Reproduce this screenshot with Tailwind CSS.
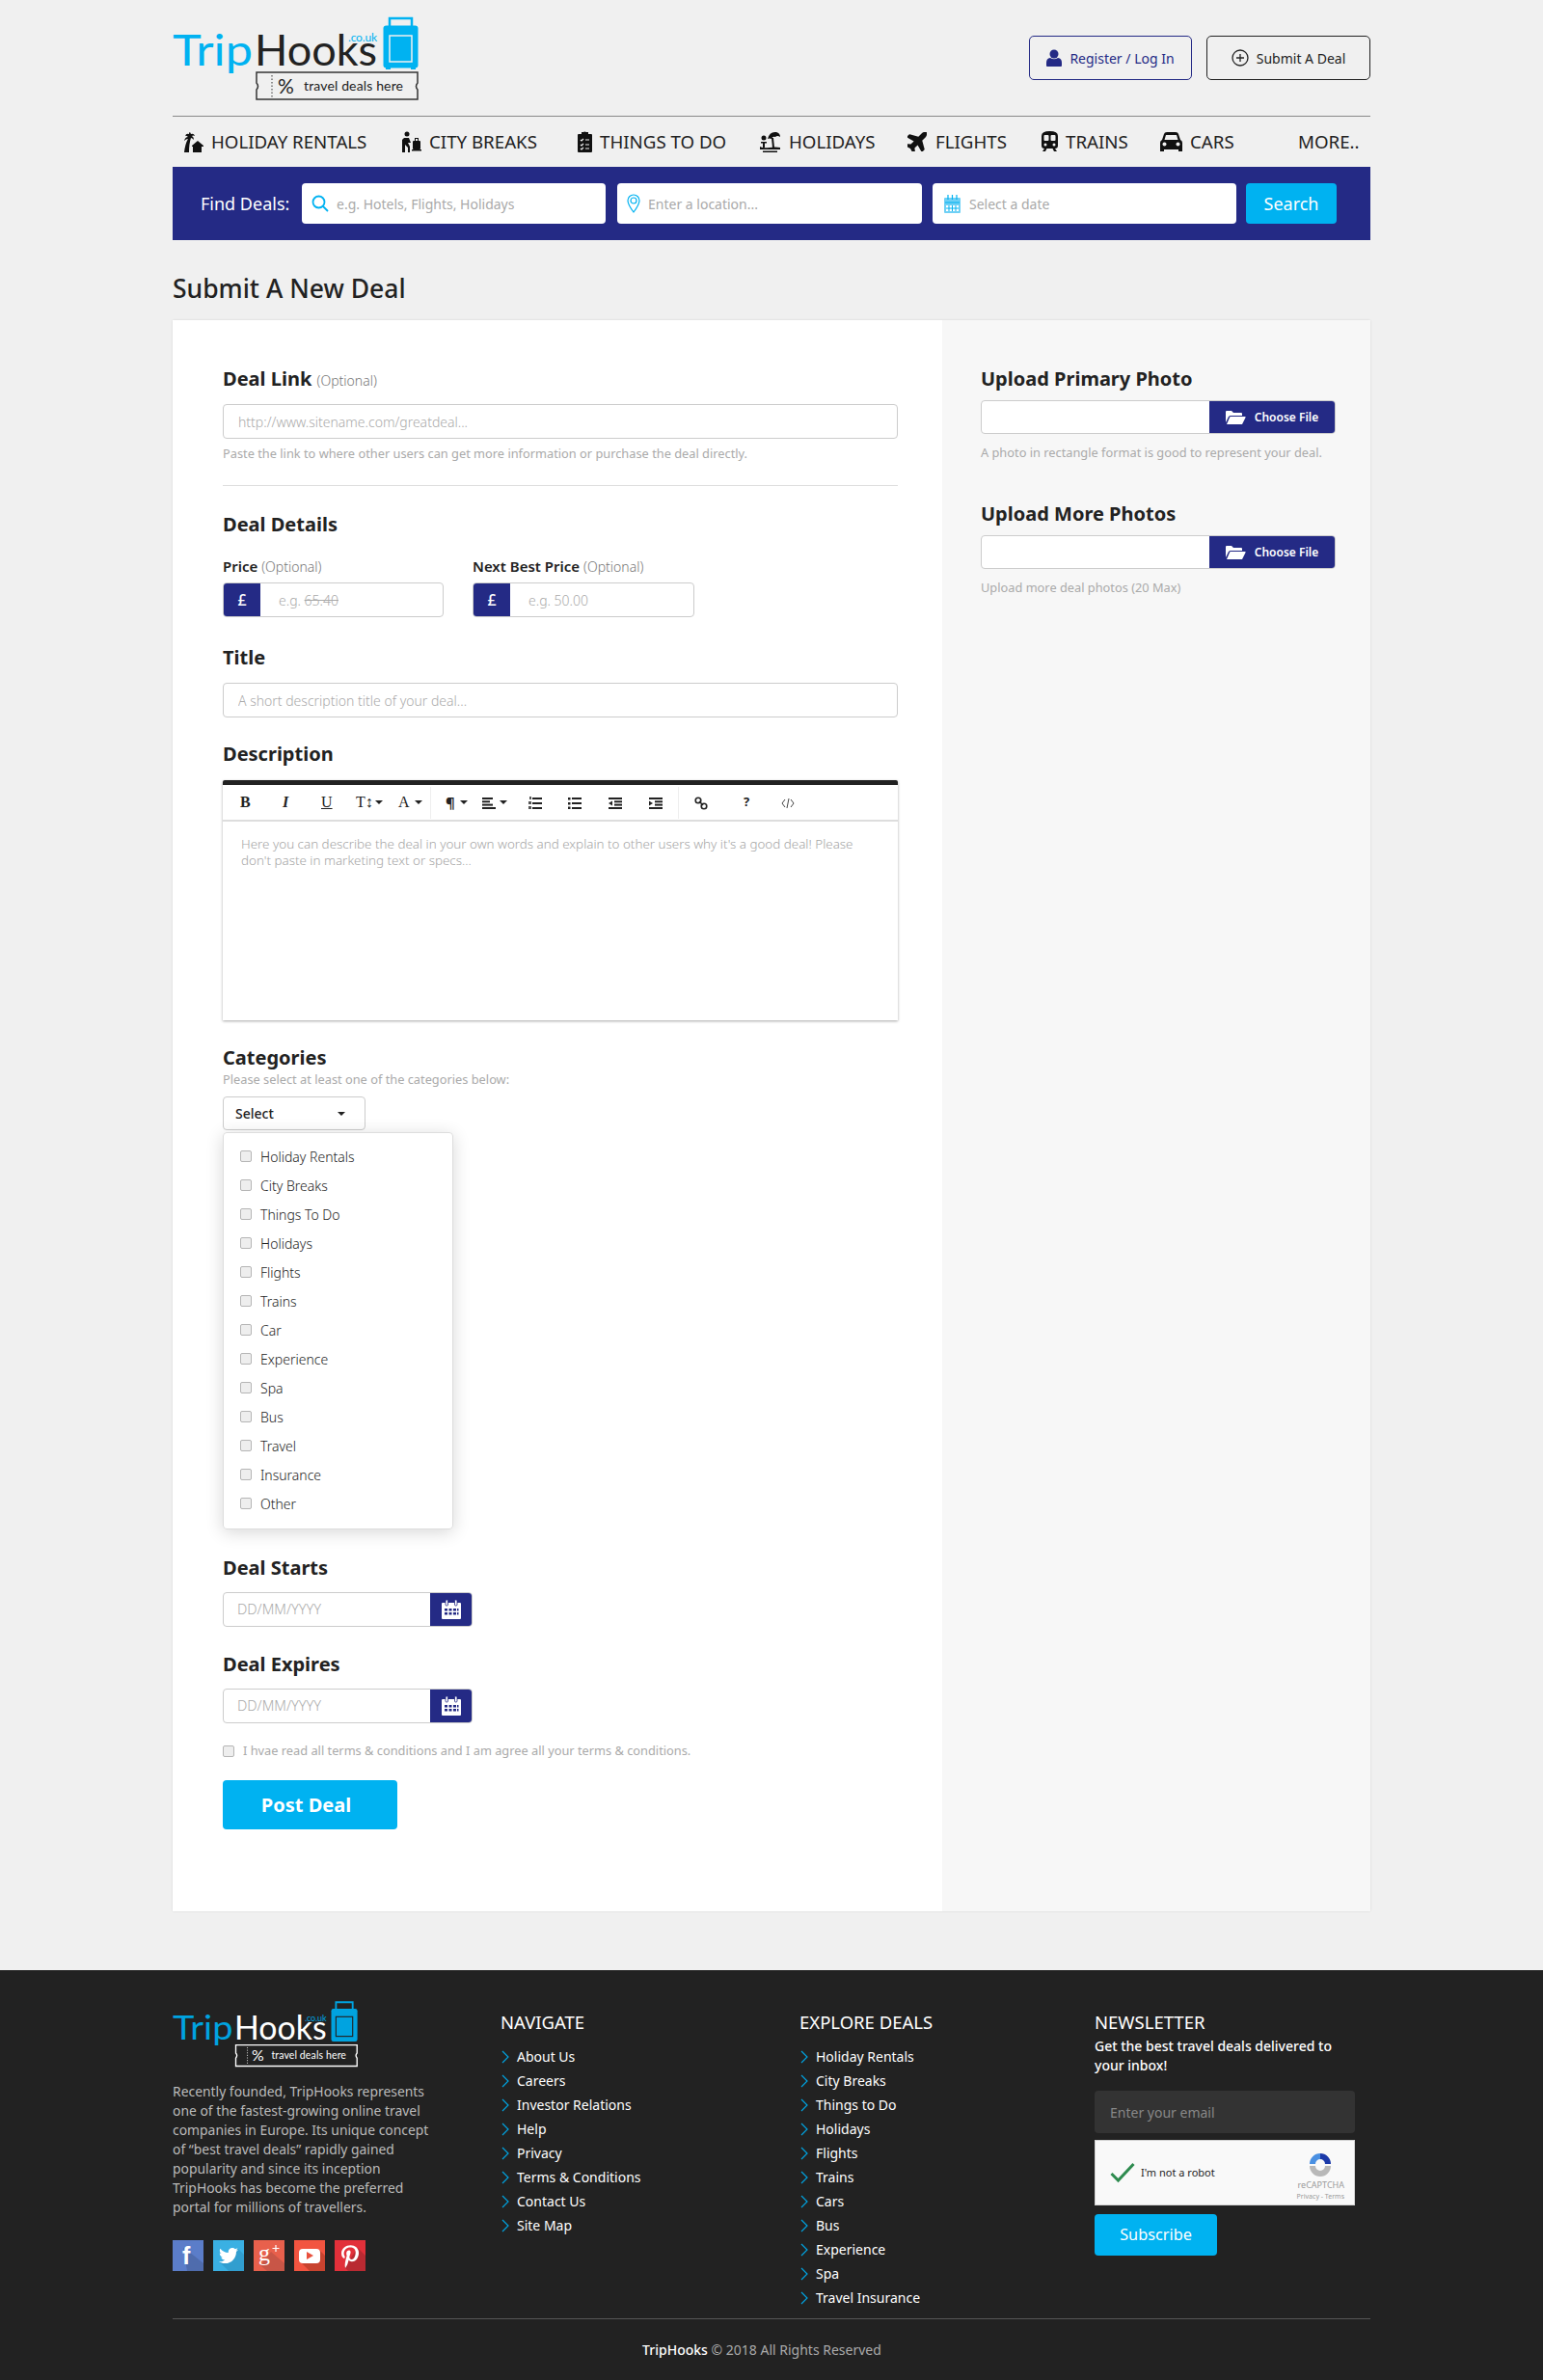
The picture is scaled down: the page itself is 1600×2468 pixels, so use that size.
<!DOCTYPE html>
<html lang="en">
<head>
    <meta charset="UTF-8">
    <meta name="viewport" content="width=device-width, initial-scale=1.0">
    <title>Submit A New Deal - TripHooks</title>
    <script src="https://cdn.jsdelivr.net/npm/@tailwindcss/browser@4"></script>
</head>
<body class="bg-[#f0f0f0] font-['Noto_Sans',sans-serif] text-[#222]">
    <div class="w-[1242px] mx-auto">
        <!-- Header -->
        <header class="h-[120px] flex justify-between border-b border-[#8a8a8a] box-content">
            <svg class="mt-[17px]" width="255" height="88" viewBox="0 0 255 88">
                <text x="0" y="51" font-family="Lato" font-size="45" fill="#00b2f1" textLength="83" lengthAdjust="spacingAndGlyphs">Trip</text>
                <text x="85" y="51" font-family="Lato" font-size="45" fill="#222" textLength="127" lengthAdjust="spacingAndGlyphs">Hooks</text>
                <text x="182" y="26" font-family="Lato" font-size="12" fill="#00b2f1" textLength="30">.co.uk</text>
                <path d="M225 10V2h23v8" fill="none" stroke="#00b2f1" stroke-width="2.5"/>
                <rect x="218.5" y="9.5" width="36" height="44" rx="3" fill="#00b2f1"/>
                <rect x="225" y="20" width="23" height="27" fill="none" stroke="#f0f0f0" stroke-width="1.5"/>
                <rect x="221" y="53" width="5" height="2" fill="#00b2f1"/><rect x="247" y="53" width="5" height="2" fill="#00b2f1"/>
                <path d="M87 58h167v11q-3 3.5 0 7v10H87V76q3-3.5 0-7z" fill="none" stroke="#333" stroke-width="1.5"/>
                <path d="M103 61v24" stroke="#333" stroke-dasharray="1.5 2"/>
                <text x="109" y="80" font-family="Lato" font-size="21" fill="#222">%</text>
                <text x="136" y="77" font-family="Lato" font-size="14" fill="#222" textLength="103">travel deals here</text>
            </svg>
            <div class="mt-[37px] flex gap-[15px]">
                <a class="w-[169px] h-[46px] flex items-center justify-center gap-2 border border-[#242a85] rounded-[5px] text-[#242a85] text-[14px]">
                    <svg width="16" height="18" viewBox="0 0 16 18" fill="#242a85"><circle cx="8" cy="5" r="4.5"/><path d="M0 17v-3q0-4.5 4-5 4 2.5 8 0 4 .5 4 5v3q0 1-1 1H1q-1 0-1-1z"/></svg>
                    Register / Log In
                </a>
                <a class="w-[170px] h-[46px] flex items-center justify-center gap-2 border border-[#222] rounded-[5px] text-[14px]">
                    <svg width="18" height="18" viewBox="0 0 18 18" fill="none" stroke="#222" stroke-width="1.3"><circle cx="9" cy="9" r="8"/><path d="M9 5v8M5 9h8"/></svg>
                    Submit A Deal
                </a>
            </div>
        </header>

        <!-- Nav -->
        <nav class="h-[52px] flex items-center text-[18.7px] text-[#222] pl-[11px]">
            <a class="w-[227px] flex items-center gap-[8px]">
                <svg width="21" height="22" viewBox="0 0 21 22" fill="#111"><path d="M1 22q1-9 4-14-2 0-4 2 1-4 4-4-2-2-3-1 1-3 4-2 0-2 1-2l1 2q3-1 4 2-2-1-3 0 2 1 2 4-2-2-3-2-2 6-2 15z"/><path d="M9 15l6-5 6 5v1h-2v6h-9v-6H9z"/></svg>
                HOLIDAY RENTALS
            </a>
            <a class="w-[182px] flex items-center gap-[8px]">
                <svg width="20" height="22" viewBox="0 0 20 22" fill="#111"><circle cx="5" cy="3" r="2.5"/><path d="M2 7h5l2 5h-3l2 4v6H6v-5l-3-3v8H0V9z"/><rect x="11" y="10" width="8" height="9" rx="1"/><path d="M13 10V7h4v3h-1V8h-2v2zM10 19h10v1.5H10z"/></svg>
                CITY BREAKS
            </a>
            <a class="w-[189px] flex items-center gap-[8px]">
                <svg width="15" height="22" viewBox="0 0 15 22"><path fill="#111" d="M1 3h3V1h2q1-1 3 0h2v2h3q1 0 1 1v17q0 1-1 1H1q-1 0-1-1V4q0-1 1-1z"/><path fill="none" stroke="#f0f0f0" stroke-width="1.2" d="M3 9l1 1 2-2M3 14l1 1 2-2M3 18l1 1 2-2M8 9h4M8 14h4M8 18h4"/></svg>
                THINGS TO DO
            </a>
            <a class="w-[153px] flex items-center gap-[9px]">
                <svg width="21" height="22" viewBox="0 0 21 22" fill="#111"><path d="M8 8q2-8 9-7 4 1 4 5-3-2-5 0-3-1-4 2-2-1-4 0z"/><path d="M14 7l1 10h-2l-1-10z"/><circle cx="4" cy="7" r="2.5"/><path d="M1 11h6v1.5H5V17H3v-4.5H1zM0 16q3 2 10 1 6-1 11 0v2H0zM3 20.5h15V22H3z"/></svg>
                HOLIDAYS
            </a>
            <a class="w-[139px] flex items-center gap-[9px]">
                <svg width="20" height="20" viewBox="40 80 456 456" fill="#111"><g transform="rotate(-45 288 288) translate(0 32)"><path d="M480 192H365.71L260.61 8.06A16.014 16.014 0 0 0 246.71 0h-65.5c-10.63 0-18.3 10.17-15.38 20.39L214.86 192H112l-43.2-57.6c-3.02-4.03-7.77-6.4-12.8-6.4H16.01C5.6 128-2.04 137.78.49 147.88L32 256 .49 364.12C-2.04 374.22 5.6 384 16.01 384H56c5.04 0 9.78-2.37 12.8-6.4L112 320h102.86l-49.03 171.6c-2.92 10.22 4.75 20.4 15.38 20.4h65.5c5.74 0 11.04-3.08 13.89-8.06L365.71 320H480c35.35 0 96-28.65 96-64s-60.65-64-96-64z"/></g></svg>
                FLIGHTS
            </a>
            <a class="w-[123px] flex items-center gap-[8px]">
                <svg width="17" height="21" viewBox="0 0 17 21"><path fill="#111" d="M0 5q0-5 8.5-5T17 5v10q0 3-3 3l2 3h-3l-1.5-3h-6L4 21H1l2-3q-3 0-3-3z"/><rect x="2.5" y="4" width="5" height="6" rx="1" fill="#f0f0f0"/><rect x="9.5" y="4" width="5" height="6" rx="1" fill="#f0f0f0"/><circle cx="4" cy="14" r="1.5" fill="#f0f0f0"/><circle cx="13" cy="14" r="1.5" fill="#f0f0f0"/></svg>
                TRAINS
            </a>
            <a class="w-[143px] flex items-center gap-[8px]">
                <svg width="23" height="20" viewBox="0 0 23 20"><path fill="#111" d="M4 2q.5-2 3-2h9q2.5 0 3 2l2 6q2 1 2 3v9h-4v-2H4v2H0v-9q0-2 2-3z"/><path fill="#f0f0f0" d="M6 3h11l1.5 5h-14z"/><circle cx="4.5" cy="12.5" r="2" fill="#f0f0f0"/><circle cx="18.5" cy="12.5" r="2" fill="#f0f0f0"/></svg>
                CARS
            </a>
            <a>MORE..</a>
        </nav>

        <!-- Search bar -->
        <div class="h-[76px] bg-[#242a85] flex items-center pl-[29px] text-[14px]">
            <span class="w-[105px] text-white text-[18px]">Find Deals:</span>
            <div class="w-[315px] h-[42px] bg-white rounded-[4px] flex items-center pl-[10px] gap-2">
                <svg width="18" height="18" viewBox="0 0 18 18" fill="none" stroke="#00b2f1" stroke-width="1.8"><circle cx="7.5" cy="7.5" r="6"/><path d="M12 12l5 5"/></svg>
                <input class="flex-1 min-w-0 outline-none placeholder:text-[#a9a9a9]" placeholder="e.g. Hotels, Flights, Holidays">
            </div>
            <div class="ml-[12px] w-[316px] h-[42px] bg-white rounded-[4px] flex items-center pl-[10px] gap-2">
                <svg width="14" height="20" viewBox="0 0 14 20" fill="none" stroke="#00b2f1" stroke-width="1.2"><path d="M7 19Q1 11 1 7a6 6 0 0 1 12 0q0 4-6 12z"/><circle cx="7" cy="7" r="3"/></svg>
                <input class="flex-1 min-w-0 outline-none placeholder:text-[#a9a9a9]" placeholder="Enter a location...">
            </div>
            <div class="ml-[11px] w-[315px] h-[42px] bg-white rounded-[4px] flex items-center pl-[12px] gap-[9px]">
                <svg width="17" height="19" viewBox="0 0 17 19"><rect y="3" width="17" height="16" rx="1" fill="#6fd0f5"/><path d="M1 8h15M4 0v5M8.5 0v5M13 0v5" stroke="#00b2f1" stroke-width="1.2"/><path d="M2 11h13v6H2z" fill="#fff"/><path d="M2 14h13M5 11v6M8.5 11v6M12 11v6" stroke="#00b2f1"/></svg>
                <input class="flex-1 min-w-0 outline-none placeholder:text-[#a9a9a9]" placeholder="Select a date">
            </div>
            <button class="ml-[10px] w-[94px] h-[42px] bg-[#00b2f1] rounded-[4px] text-white text-[18px]">Search</button>
        </div>

        <h1 class="pt-[36px] pb-[19px] text-[26.5px] leading-[28px] font-medium">Submit A New Deal</h1>

        <!-- Card -->
        <div class="h-[1650px] flex bg-white shadow-[0_0_2px_rgba(0,0,0,0.12)]">
            <div class="w-[798px] pl-[52px] pr-[46px] pt-[49px]">
                <h2 class="h-[24px] text-[20px] leading-[24px] font-bold">Deal Link <span class="text-[14px] font-light text-[#777]">(Optional)</span></h2>
                <input class="mt-[14px] w-full h-[36px] px-[15px] border border-[#ccc] rounded-[4px] text-[14px] font-light outline-none placeholder:text-[#aaa]" placeholder="http://www.sitename.com/greatdeal...">
                <p class="mt-[7px] text-[12.8px] leading-[16px] text-[#aaa]">Paste the link to where other users can get more information or purchase the deal directly.</p>
                <div class="mt-[25px] border-t border-[#ddd]"></div>

                <h2 class="mt-[28px] text-[20px] leading-[24px] font-bold">Deal Details</h2>
                <div class="mt-[21px] flex gap-[30px]">
                    <div class="w-[229px]">
                        <div class="h-[20px] text-[15px] leading-[20px] font-semibold">Price <span class="text-[14px] font-light text-[#777]">(Optional)</span></div>
                        <div class="mt-[7px] h-[36px] flex border border-[#ccc] rounded-[4px] overflow-hidden">
                            <span class="w-[38px] bg-[#242a85] text-white flex items-center justify-center text-[16px] font-medium">£</span>
                            <span class="pl-[19px] flex items-center text-[14px] font-light text-[#aaa]">e.g.&nbsp;<span class="line-through">65.40</span></span>
                        </div>
                    </div>
                    <div class="w-[230px]">
                        <div class="h-[20px] text-[15px] leading-[20px] font-semibold">Next Best Price <span class="text-[14px] font-light text-[#777]">(Optional)</span></div>
                        <div class="mt-[7px] h-[36px] flex border border-[#ccc] rounded-[4px] overflow-hidden">
                            <span class="w-[38px] bg-[#242a85] text-white flex items-center justify-center text-[16px] font-medium">£</span>
                            <span class="pl-[19px] flex items-center text-[14px] font-light text-[#aaa]">e.g. 50.00</span>
                        </div>
                    </div>
                </div>

                <h2 class="mt-[30px] text-[20px] leading-[24px] font-bold">Title</h2>
                <input class="mt-[14px] w-full h-[36px] px-[15px] border border-[#ccc] rounded-[4px] text-[14px] font-light outline-none placeholder:text-[#aaa]" placeholder="A short description title of your deal...">

                <h2 class="mt-[26px] text-[20px] leading-[24px] font-bold">Description</h2>
                <!-- Editor -->
                <div class="mt-[15px] h-[249px] border-t-[5px] border-[#222] rounded-t-[2px] shadow-[0_1px_3px_rgba(0,0,0,0.35)]">
                    <div class="relative h-[38px] border-b-2 border-[#ddd] flex items-center text-[#222]">
                        <span class="absolute left-[18px] font-['Liberation_Serif'] text-[16px] font-bold">B</span>
                        <span class="absolute left-[62px] font-['Liberation_Serif'] text-[16px] italic font-bold">I</span>
                        <span class="absolute left-[102px] font-['Liberation_Serif'] text-[16px] underline">U</span>
                        <span class="absolute left-[138px] font-['Liberation_Serif'] text-[16px]">T↕</span>
                        <span class="absolute left-[182px] font-['Liberation_Serif'] text-[16px]">A</span>
                        <i class="absolute left-[158px] top-[16px] border-x-[4px] border-t-[4px] border-x-transparent border-t-[#222]"></i>
                        <i class="absolute left-[199px] top-[16px] border-x-[4px] border-t-[4px] border-x-transparent border-t-[#222]"></i>
                        <div class="absolute left-[215px] top-[2px] h-[33px] border-l border-[#eee]"></div>
                        <span class="absolute left-[231px] text-[15px] font-bold">¶</span>
                        <i class="absolute left-[246px] top-[16px] border-x-[4px] border-t-[4px] border-x-transparent border-t-[#222]"></i>
                        <svg class="absolute left-[269px] top-[13px]" width="14" height="12" fill="#222"><rect width="11" height="2"/><rect y="3.3" width="8" height="2"/><rect y="6.6" width="11" height="2"/><rect y="10" width="14" height="2"/></svg>
                        <i class="absolute left-[287px] top-[16px] border-x-[4px] border-t-[4px] border-x-transparent border-t-[#222]"></i>
                        <svg class="absolute left-[317px] top-[12px]" width="14" height="14" fill="#222"><rect x="1" y="0" width="2" height="3" fill="#555"/><rect x="0" y="5" width="3" height="3" fill="#555"/><rect x="0" y="10" width="3" height="3" fill="#555"/><rect x="4" y="1" width="10" height="2"/><rect x="4" y="6" width="10" height="2"/><rect x="4" y="11" width="10" height="2"/></svg>
                        <svg class="absolute left-[358px] top-[13px]" width="14" height="12" fill="#222"><rect width="2.5" height="2.5"/><rect y="5" width="2.5" height="2.5"/><rect y="9.5" width="2.5" height="2.5"/><rect x="4" width="10" height="2"/><rect x="4" y="5" width="10" height="2"/><rect x="4" y="10" width="10" height="2"/></svg>
                        <svg class="absolute left-[400px] top-[13px]" width="14" height="12" fill="#222"><rect width="14" height="2"/><rect x="6" y="3.3" width="8" height="2"/><rect x="6" y="6.6" width="8" height="2"/><rect y="10" width="14" height="2"/><path d="M4 3.5v5L0 6z"/></svg>
                        <svg class="absolute left-[442px] top-[13px]" width="14" height="12" fill="#222"><rect width="14" height="2"/><rect x="6" y="3.3" width="8" height="2"/><rect x="6" y="6.6" width="8" height="2"/><rect y="10" width="14" height="2"/><path d="M0 3.5v5L4 6z"/></svg>
                        <div class="absolute left-[472px] top-[2px] h-[33px] border-l border-[#eee]"></div>
                        <svg class="absolute left-[489px] top-[12px]" width="14" height="14" fill="none" stroke="#222" stroke-width="1.6"><ellipse cx="4" cy="4" rx="2.8" ry="2.8"/><ellipse cx="10" cy="10" rx="2.8" ry="2.8"/><path d="M5 5l4 4"/></svg>
                        <span class="absolute left-[540px] text-[13px] font-bold">?</span>
                        <svg class="absolute left-[579px] top-[13px]" width="14" height="12" fill="none" stroke="#444"><path d="M4 2L1 6l3 4M10 2l3 4-3 4M8 1L6 11"/></svg>
                    </div>
                    <p class="px-[19px] pt-[15px] text-[13.4px] leading-[17px] font-light text-[#a5a5a5]">Here you can describe the deal in your own words and explain to other users why it's a good deal! Please don't paste in marketing text or specs...</p>
                </div>

                <h2 class="mt-[27px] text-[20px] leading-[24px] font-bold">Categories</h2>
                <p class="mt-[3px] text-[12.8px] leading-[14px] text-[#aaa]">Please select at least one of the categories below:</p>
                <button class="mt-[11px] w-[148px] h-[35px] pl-[12px] pr-[20px] flex items-center justify-between border border-[#ccc] rounded-[4px] text-[14px] font-medium">
                    Select
                    <i class="border-x-[4px] border-t-[4px] border-x-transparent border-t-[#222]"></i>
                </button>
                <!-- Category dropdown -->
                <div class="mt-[2px] w-[239px] h-[412px] pt-[9px] pl-[17px] border border-[#ddd] rounded-[4px] shadow-[0_3px_18px_rgba(0,0,0,0.16)] text-[14px] font-light">
                    <label class="h-[30px] flex items-center gap-[9px]"><input type="checkbox" class="appearance-none w-[12px] h-[12px] bg-[#eee] border border-[#b5b5b5] rounded-[2px]">Holiday Rentals</label>
                    <label class="h-[30px] flex items-center gap-[9px]"><input type="checkbox" class="appearance-none w-[12px] h-[12px] bg-[#eee] border border-[#b5b5b5] rounded-[2px]">City Breaks</label>
                    <label class="h-[30px] flex items-center gap-[9px]"><input type="checkbox" class="appearance-none w-[12px] h-[12px] bg-[#eee] border border-[#b5b5b5] rounded-[2px]">Things To Do</label>
                    <label class="h-[30px] flex items-center gap-[9px]"><input type="checkbox" class="appearance-none w-[12px] h-[12px] bg-[#eee] border border-[#b5b5b5] rounded-[2px]">Holidays</label>
                    <label class="h-[30px] flex items-center gap-[9px]"><input type="checkbox" class="appearance-none w-[12px] h-[12px] bg-[#eee] border border-[#b5b5b5] rounded-[2px]">Flights</label>
                    <label class="h-[30px] flex items-center gap-[9px]"><input type="checkbox" class="appearance-none w-[12px] h-[12px] bg-[#eee] border border-[#b5b5b5] rounded-[2px]">Trains</label>
                    <label class="h-[30px] flex items-center gap-[9px]"><input type="checkbox" class="appearance-none w-[12px] h-[12px] bg-[#eee] border border-[#b5b5b5] rounded-[2px]">Car</label>
                    <label class="h-[30px] flex items-center gap-[9px]"><input type="checkbox" class="appearance-none w-[12px] h-[12px] bg-[#eee] border border-[#b5b5b5] rounded-[2px]">Experience</label>
                    <label class="h-[30px] flex items-center gap-[9px]"><input type="checkbox" class="appearance-none w-[12px] h-[12px] bg-[#eee] border border-[#b5b5b5] rounded-[2px]">Spa</label>
                    <label class="h-[30px] flex items-center gap-[9px]"><input type="checkbox" class="appearance-none w-[12px] h-[12px] bg-[#eee] border border-[#b5b5b5] rounded-[2px]">Bus</label>
                    <label class="h-[30px] flex items-center gap-[9px]"><input type="checkbox" class="appearance-none w-[12px] h-[12px] bg-[#eee] border border-[#b5b5b5] rounded-[2px]">Travel</label>
                    <label class="h-[30px] flex items-center gap-[9px]"><input type="checkbox" class="appearance-none w-[12px] h-[12px] bg-[#eee] border border-[#b5b5b5] rounded-[2px]">Insurance</label>
                    <label class="h-[30px] flex items-center gap-[9px]"><input type="checkbox" class="appearance-none w-[12px] h-[12px] bg-[#eee] border border-[#b5b5b5] rounded-[2px]">Other</label>
                </div>

                <h2 class="mt-[28px] text-[20px] leading-[24px] font-bold">Deal Starts</h2>
                <div class="mt-[13px] w-[259px] h-[36px] flex border border-[#ccc] rounded-[4px] overflow-hidden">
                    <input class="w-[214px] pl-[14px] text-[14.5px] font-light outline-none placeholder:text-[#aaa]" placeholder="DD/MM/YYYY">
                    <span class="flex-1 bg-[#242a85] flex items-center justify-center">
                        <svg width="20" height="20" viewBox="0 0 20 20"><path fill="#fff" d="M1 3h18q1 0 1 1v15q0 1-1 1H1q-1 0-1-1V4q0-1 1-1z"/><rect x="4" y="0" width="2.5" height="6" rx="1" fill="#fff" stroke="#242a85" stroke-width=".8"/><rect x="13.5" y="0" width="2.5" height="6" rx="1" fill="#fff" stroke="#242a85" stroke-width=".8"/><path fill="#242a85" d="M3 9h3v2.5H3zM7.5 9h3v2.5h-3zM12 9h3v2.5h-3zM16 9h1.5v2.5H16zM3 13h3v2.5H3zM7.5 13h3v2.5h-3zM12 13h3v2.5h-3zM16 13h1.5v2.5H16z"/></svg>
                    </span>
                </div>
                <h2 class="mt-[27px] text-[20px] leading-[24px] font-bold">Deal Expires</h2>
                <div class="mt-[13px] w-[259px] h-[36px] flex border border-[#ccc] rounded-[4px] overflow-hidden">
                    <input class="w-[214px] pl-[14px] text-[14.5px] font-light outline-none placeholder:text-[#aaa]" placeholder="DD/MM/YYYY">
                    <span class="flex-1 bg-[#242a85] flex items-center justify-center">
                        <svg width="20" height="20" viewBox="0 0 20 20"><path fill="#fff" d="M1 3h18q1 0 1 1v15q0 1-1 1H1q-1 0-1-1V4q0-1 1-1z"/><rect x="4" y="0" width="2.5" height="6" rx="1" fill="#fff" stroke="#242a85" stroke-width=".8"/><rect x="13.5" y="0" width="2.5" height="6" rx="1" fill="#fff" stroke="#242a85" stroke-width=".8"/><path fill="#242a85" d="M3 9h3v2.5H3zM7.5 9h3v2.5h-3zM12 9h3v2.5h-3zM16 9h1.5v2.5H16zM3 13h3v2.5H3zM7.5 13h3v2.5h-3zM12 13h3v2.5h-3zM16 13h1.5v2.5H16z"/></svg>
                    </span>
                </div>
                <label class="mt-[21px] h-[16px] flex items-center gap-[9px] text-[12.8px] text-[#aaa]"><input type="checkbox" class="appearance-none w-[12px] h-[12px] bg-[#eee] border border-[#b5b5b5] rounded-[2px]">I hvae read all terms &amp; conditions and I am agree all your terms &amp; conditions.</label>
                <button class="mt-[22px] w-[181px] h-[51px] pr-[8px] bg-[#00b2f1] rounded-[4px] text-white text-[20px] font-bold">Post Deal</button>
            </div>

            <!-- Uploads -->
            <div class="flex-1 bg-[#f7f7f7] pl-[40px] pr-[36px] pt-[49px]">
                <h2 class="text-[20px] leading-[24px] font-bold">Upload Primary Photo</h2>
                <div class="mt-[10px] h-[35px] flex bg-white border border-[#ccc] rounded-[4px] overflow-hidden">
                    <span class="flex-1"></span>
                    <span class="w-[130px] bg-[#242a85] text-white text-[12px] font-semibold flex items-center justify-center gap-[9px]">
                        <svg width="21" height="16" viewBox="0 0 21 16" fill="#fff"><path d="M0 2q0-1 1-1h5l2 2h8q1 0 1 1v2H5q-1 0-2 1L0 13z"/><path d="M5 7h15q1 0 .5 1L17 15H1l3-7q.3-1 1-1z"/></svg>
                        Choose File
                    </span>
                </div>
                <p class="mt-[11px] text-[12.8px] leading-[16px] text-[#aaa]">A photo in rectangle format is good to represent your deal.</p>
                <h2 class="mt-[44px] text-[20px] leading-[24px] font-bold">Upload More Photos</h2>
                <div class="mt-[10px] h-[35px] flex bg-white border border-[#ccc] rounded-[4px] overflow-hidden">
                    <span class="flex-1"></span>
                    <span class="w-[130px] bg-[#242a85] text-white text-[12px] font-semibold flex items-center justify-center gap-[9px]">
                        <svg width="21" height="16" viewBox="0 0 21 16" fill="#fff"><path d="M0 2q0-1 1-1h5l2 2h8q1 0 1 1v2H5q-1 0-2 1L0 13z"/><path d="M5 7h15q1 0 .5 1L17 15H1l3-7q.3-1 1-1z"/></svg>
                        Choose File
                    </span>
                </div>
                <p class="mt-[11px] text-[12.8px] leading-[16px] text-[#aaa]">Upload more deal photos (20 Max)</p>
            </div>
        </div>
    </div>

    <!-- Footer -->
    <footer class="mt-[61px] h-[425px] bg-[#222] text-white">
        <div class="w-[1242px] mx-auto pt-[31px]">
            <div class="h-[330px] grid grid-cols-[340px_310px_306px_1fr]">
                <div>
                    <svg class="block" width="192" height="70" viewBox="0 0 255 93">
                        <text x="0" y="54" font-family="Lato" font-size="45" fill="#00a3e0" textLength="83" lengthAdjust="spacingAndGlyphs">Trip</text>
                        <text x="85" y="54" font-family="Lato" font-size="45" fill="#fff" textLength="127" lengthAdjust="spacingAndGlyphs">Hooks</text>
                        <text x="182" y="29" font-family="Lato" font-size="12" fill="#00a3e0" textLength="30">.co.uk</text>
                        <path d="M225 13V3h23v10" fill="none" stroke="#00a3e0" stroke-width="2.5"/>
                        <rect x="218.5" y="12" width="36" height="45" rx="3" fill="#00a3e0"/>
                        <rect x="225" y="23" width="23" height="27" fill="none" stroke="#222" stroke-width="1.5"/>
                        <path d="M87 62h167v11q-3 3.5 0 7v11H87V80q3-3.5 0-7z" fill="none" stroke="#fff" stroke-width="1.8"/>
                        <path d="M103 65v24" stroke="#fff" stroke-dasharray="1.5 2"/>
                        <text x="109" y="84" font-family="Lato" font-size="21" fill="#fff">%</text>
                        <text x="136" y="81" font-family="Lato" font-size="14" fill="#fff" textLength="103">travel deals here</text>
                    </svg>
                    <p class="mt-[15px] w-[280px] text-[13.9px] leading-[20px] text-[#bbb]">Recently founded, TripHooks represents one of the fastest-growing online travel companies in Europe. Its unique concept of “best travel deals” rapidly gained popularity and since its inception TripHooks has become the preferred portal for millions of travellers.</p>
                    <div class="mt-[24px] flex gap-[10px]">
                        <svg width="32" height="32" viewBox="0 0 32 32"><rect width="32" height="32" fill="#5b7dc9"/><path d="M12 8l20 16v8H15l-4-24z" fill="#4f6cad"/><text x="10" y="25" font-family="Liberation Sans" font-weight="bold" font-size="25" fill="#fff">f</text></svg>
                        <svg width="32" height="32" viewBox="0 0 32 32"><rect width="32" height="32" fill="#3ab0e3"/><path d="M26 9l6 6v17H16l-9-9z" fill="#319ecf"/><svg x="6" y="6" width="20" height="20" viewBox="0 0 512 512"><path fill="#fff" d="M459.37 151.716c.325 4.548.325 9.097.325 13.645 0 138.72-105.583 298.558-298.558 298.558-59.452 0-114.68-17.219-161.137-47.106 8.447.974 16.568 1.299 25.34 1.299 49.055 0 94.213-16.568 130.274-44.832-46.132-.975-84.792-31.188-98.112-72.772 6.498.974 12.995 1.624 19.818 1.624 9.421 0 18.843-1.3 27.614-3.573-48.081-9.747-84.143-51.98-84.143-102.985v-1.299c13.969 7.797 30.214 12.67 47.431 13.319-28.264-18.843-46.781-51.005-46.781-87.391 0-19.492 5.197-37.36 14.294-52.954 51.655 63.675 129.3 105.258 216.365 109.807-1.624-7.797-2.599-15.918-2.599-24.04 0-57.828 46.782-104.934 104.934-104.934 30.213 0 57.502 12.67 76.67 33.137 23.715-4.548 46.456-13.32 66.599-25.34-7.798 24.366-24.366 44.833-46.132 57.827 21.117-2.273 41.584-8.122 60.426-16.243-14.292 20.791-32.161 39.308-52.628 54.253z"/></svg></svg>
                        <svg width="32" height="32" viewBox="0 0 32 32"><rect width="32" height="32" fill="#e8604c"/><path d="M18 12l14 12v8H14l-7-6z" fill="#c85647"/><text x="5" y="21" font-family="Liberation Serif" font-size="24" fill="#fff">g</text><path d="M23 5v7M19.5 8.5h7" stroke="#fff" stroke-width="1.2"/></svg>
                        <svg width="32" height="32" viewBox="0 0 32 32"><rect width="32" height="32" fill="#f25440"/><path d="M26 10l6 6v16H16L6 22z" fill="#c8432f"/><rect x="5" y="9" width="22" height="15" rx="4" fill="#fff"/><path d="M13 12v8l7-4z" fill="#e8503d"/></svg>
                        <svg width="32" height="32" viewBox="0 0 32 32"><rect width="32" height="32" fill="#e2303a"/><path d="M24 8l8 8v16H14l-4-4z" fill="#b92a32"/><svg x="7" y="5" width="18" height="24" viewBox="0 0 384 512"><path fill="#fff" d="M204 6.5C101.4 6.5 0 74.9 0 185.6 0 256 39.6 296 63.6 296c9.9 0 15.6-27.6 15.6-35.4 0-9.3-23.7-29.1-23.7-67.8 0-80.4 61.2-137.4 140.4-137.4 68.1 0 118.5 38.7 118.5 109.8 0 53.1-21.3 152.7-90.3 152.7-24.9 0-46.2-18-46.2-43.8 0-37.8 26.4-74.4 26.4-113.4 0-66.2-93.9-54.2-93.9 25.8 0 16.8 2.1 35.4 9.6 50.7-13.8 59.4-42 147.9-42 209.1 0 18.9 2.7 37.5 4.5 56.4 3.4 3.8 1.7 3.4 6.9 1.5 50.4-69 48.6-82.5 71.4-172.8 12.3 23.4 44.1 36 69.3 36 106.2 0 153.9-103.5 153.9-196.8C384 71.3 298.2 6.5 204 6.5z"/></svg></svg>
                    </div>
                </div>
                <div class="pt-[12px]">
                    <h3 class="text-[18.5px] leading-[22px]">NAVIGATE</h3>
                    <ul class="mt-[12px] text-[14px] leading-[25px]">
                        <li class="flex items-center gap-[8px]"><svg width="9" height="14" viewBox="0 0 9 14" fill="none" stroke="#00a3e0" stroke-width="1.2"><path d="M2 1l6 6-6 6"/></svg>About Us</li>
                        <li class="flex items-center gap-[8px]"><svg width="9" height="14" viewBox="0 0 9 14" fill="none" stroke="#00a3e0" stroke-width="1.2"><path d="M2 1l6 6-6 6"/></svg>Careers</li>
                        <li class="flex items-center gap-[8px]"><svg width="9" height="14" viewBox="0 0 9 14" fill="none" stroke="#00a3e0" stroke-width="1.2"><path d="M2 1l6 6-6 6"/></svg>Investor Relations</li>
                        <li class="flex items-center gap-[8px]"><svg width="9" height="14" viewBox="0 0 9 14" fill="none" stroke="#00a3e0" stroke-width="1.2"><path d="M2 1l6 6-6 6"/></svg>Help</li>
                        <li class="flex items-center gap-[8px]"><svg width="9" height="14" viewBox="0 0 9 14" fill="none" stroke="#00a3e0" stroke-width="1.2"><path d="M2 1l6 6-6 6"/></svg>Privacy</li>
                        <li class="flex items-center gap-[8px]"><svg width="9" height="14" viewBox="0 0 9 14" fill="none" stroke="#00a3e0" stroke-width="1.2"><path d="M2 1l6 6-6 6"/></svg>Terms &amp; Conditions</li>
                        <li class="flex items-center gap-[8px]"><svg width="9" height="14" viewBox="0 0 9 14" fill="none" stroke="#00a3e0" stroke-width="1.2"><path d="M2 1l6 6-6 6"/></svg>Contact Us</li>
                        <li class="flex items-center gap-[8px]"><svg width="9" height="14" viewBox="0 0 9 14" fill="none" stroke="#00a3e0" stroke-width="1.2"><path d="M2 1l6 6-6 6"/></svg>Site Map</li>
                    </ul>
                </div>
                <div class="pt-[12px]">
                    <h3 class="text-[18.5px] leading-[22px]">EXPLORE DEALS</h3>
                    <ul class="mt-[12px] text-[14px] leading-[25px]">
                        <li class="flex items-center gap-[8px]"><svg width="9" height="14" viewBox="0 0 9 14" fill="none" stroke="#00a3e0" stroke-width="1.2"><path d="M2 1l6 6-6 6"/></svg>Holiday Rentals</li>
                        <li class="flex items-center gap-[8px]"><svg width="9" height="14" viewBox="0 0 9 14" fill="none" stroke="#00a3e0" stroke-width="1.2"><path d="M2 1l6 6-6 6"/></svg>City Breaks</li>
                        <li class="flex items-center gap-[8px]"><svg width="9" height="14" viewBox="0 0 9 14" fill="none" stroke="#00a3e0" stroke-width="1.2"><path d="M2 1l6 6-6 6"/></svg>Things to Do</li>
                        <li class="flex items-center gap-[8px]"><svg width="9" height="14" viewBox="0 0 9 14" fill="none" stroke="#00a3e0" stroke-width="1.2"><path d="M2 1l6 6-6 6"/></svg>Holidays</li>
                        <li class="flex items-center gap-[8px]"><svg width="9" height="14" viewBox="0 0 9 14" fill="none" stroke="#00a3e0" stroke-width="1.2"><path d="M2 1l6 6-6 6"/></svg>Flights</li>
                        <li class="flex items-center gap-[8px]"><svg width="9" height="14" viewBox="0 0 9 14" fill="none" stroke="#00a3e0" stroke-width="1.2"><path d="M2 1l6 6-6 6"/></svg>Trains</li>
                        <li class="flex items-center gap-[8px]"><svg width="9" height="14" viewBox="0 0 9 14" fill="none" stroke="#00a3e0" stroke-width="1.2"><path d="M2 1l6 6-6 6"/></svg>Cars</li>
                        <li class="flex items-center gap-[8px]"><svg width="9" height="14" viewBox="0 0 9 14" fill="none" stroke="#00a3e0" stroke-width="1.2"><path d="M2 1l6 6-6 6"/></svg>Bus</li>
                        <li class="flex items-center gap-[8px]"><svg width="9" height="14" viewBox="0 0 9 14" fill="none" stroke="#00a3e0" stroke-width="1.2"><path d="M2 1l6 6-6 6"/></svg>Experience</li>
                        <li class="flex items-center gap-[8px]"><svg width="9" height="14" viewBox="0 0 9 14" fill="none" stroke="#00a3e0" stroke-width="1.2"><path d="M2 1l6 6-6 6"/></svg>Spa</li>
                        <li class="flex items-center gap-[8px]"><svg width="9" height="14" viewBox="0 0 9 14" fill="none" stroke="#00a3e0" stroke-width="1.2"><path d="M2 1l6 6-6 6"/></svg>Travel Insurance</li>
                    </ul>
                </div>
                <div class="pt-[12px] w-[270px]">
                    <h3 class="text-[18.5px] leading-[22px]">NEWSLETTER</h3>
                    <p class="mt-[4px] text-[14px] leading-[20px] font-medium">Get the best travel deals delivered to your inbox!</p>
                    <input class="mt-[16px] w-full h-[44px] px-[16px] bg-[#333] rounded-[4px] text-[14px] outline-none placeholder:text-[#888]" placeholder="Enter your email">
                    <div class="mt-[7px] h-[68px] relative bg-[#f9f9f9] border border-[#d3d3d3] flex items-center pl-[15px] gap-[6px] text-[#222] text-[11px]">
                        <svg width="26" height="22" viewBox="0 0 26 22" fill="none" stroke="#2e8b4f" stroke-width="3"><path d="M1.5 12l7 7L24.5 2"/></svg>
                        I'm not a robot
                        <svg class="absolute right-[21px] top-[11px]" width="28" height="28" viewBox="0 0 28 28" fill="none" stroke-width="6"><path d="M6 13A8 8 0 0 1 14 5" stroke="#4a90e2"/><path d="M14 5a8 8 0 0 1 8 8" stroke="#1c3aa9"/><path d="M22 15a8 8 0 0 1-16 0" stroke="#b8b8b8"/></svg>
                        <span class="absolute right-[10px] top-[39px] text-[9px] text-[#999]">reCAPTCHA</span>
                        <span class="absolute right-[10px] top-[53px] text-[7px] text-[#999]">Privacy - Terms</span>
                    </div>
                    <button class="mt-[9px] w-[127px] h-[43px] bg-[#00b2f1] rounded-[4px] text-white text-[16.3px]">Subscribe</button>
                </div>
            </div>
            <div class="h-[64px] pr-[20px] border-t border-[#555] flex items-center justify-center text-[14px] text-[#aaa]"><span><span class="text-white font-medium">TripHooks</span> © 2018 All Rights Reserved</span></div>
        </div>
    </footer>
</body>
</html>
